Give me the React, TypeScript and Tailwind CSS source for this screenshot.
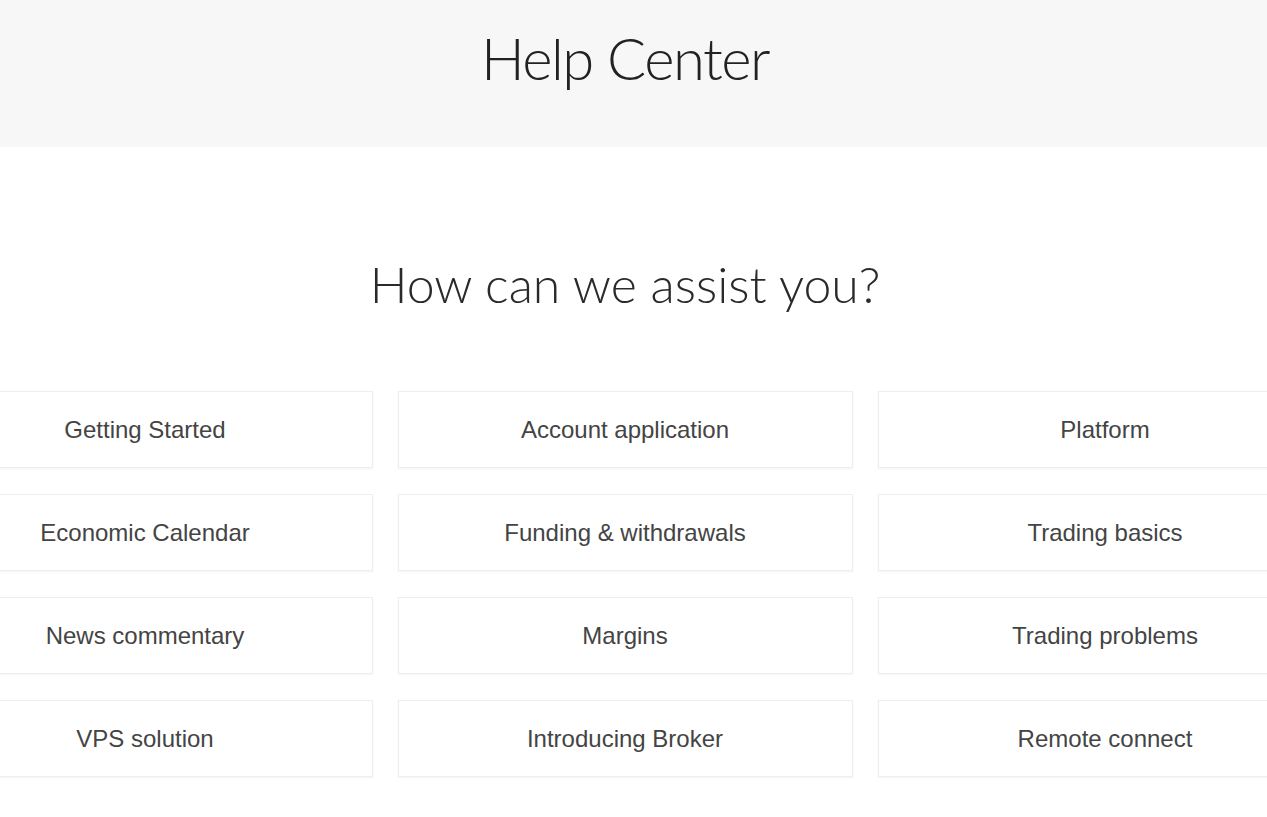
const topics = [
  "Getting Started",
  "Account application",
  "Platform",
  "Economic Calendar",
  "Funding & withdrawals",
  "Trading basics",
  "News commentary",
  "Margins",
  "Trading problems",
  "VPS solution",
  "Introducing Broker",
  "Remote connect",
];

export default function App() {
  return (
    <div className="min-h-screen w-full overflow-hidden bg-white">
      <header className="h-[147px] w-full bg-[#f7f7f7]">
        <div className="flex w-[1250px] justify-center pt-[20px]">
          <h1 className="font-['Lato',sans-serif] text-[58px] font-light leading-[76px] tracking-[-1.5px] text-[#222]">Help Center</h1>
        </div>
      </header>

      <div className="w-[1250px]">
        <section className="pt-[104px]">
          <h2 className="text-center font-['Lato',sans-serif] text-[50px] font-light leading-[66px] text-[#2a2a2a]">
            How can we assist you?
          </h2>

          <div className="mt-[74px] flex justify-center">
            <div className="grid w-[1415px] shrink-0 grid-cols-3 gap-x-[25px] gap-y-[26px]">
              {topics.map((topic) => (
                <a
                  key={topic}
                  href="#"
                  className="flex h-[77px] items-center justify-center border border-[#eeeeee] bg-white font-['Liberation_Sans',Arial,sans-serif] text-[24px] text-[#444] shadow-[0_1px_2px_rgba(0,0,0,0.05)]"
                >
                  {topic}
                </a>
              ))}
            </div>
          </div>
        </section>
      </div>
    </div>
  );
}
